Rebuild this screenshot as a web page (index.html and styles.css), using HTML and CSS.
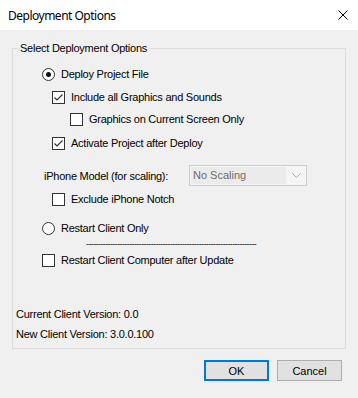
FILE: index.html
```html
<!DOCTYPE html>
<html lang="en">
<head>
    <meta charset="UTF-8">
    <title>Deployment Options</title>
    <link rel="stylesheet" href="styles.css">
</head>
<body>
    <div class="window">
        <div class="titlebar">
            <span class="title">Deployment Options</span>
            <svg class="close" width="10" height="10" viewBox="0 0 10 10">
                <path d="M0.5 0.5 L9.5 9.5 M9.5 0.5 L0.5 9.5" stroke="#000" stroke-width="1" fill="none"/>
            </svg>
        </div>

        <div class="client">
            <fieldset class="group">
                <legend>Select Deployment Options</legend>

                <div class="row lvl0 r-deploy">
                    <span class="radio checked"></span>
                    <span>Deploy Project File</span>
                </div>
                <div class="row lvl1 r-include">
                    <span class="check checked"><svg width="11" height="11" viewBox="0 0 11 11"><path d="M1.5 5.5 L4 8 L9.5 2.5" stroke="#333" stroke-width="1.2" fill="none"/></svg></span>
                    <span>Include all Graphics and Sounds</span>
                </div>
                <div class="row lvl2 r-current">
                    <span class="check"></span>
                    <span>Graphics on Current Screen Only</span>
                </div>
                <div class="row lvl1 r-activate">
                    <span class="check checked"><svg width="11" height="11" viewBox="0 0 11 11"><path d="M1.5 5.5 L4 8 L9.5 2.5" stroke="#333" stroke-width="1.2" fill="none"/></svg></span>
                    <span>Activate Project after Deploy</span>
                </div>
                <div class="row model-row">
                    <span class="model-label">iPhone Model (for scaling):</span>
                    <div class="combo">
                        <span class="combo-text">No Scaling</span>
                        <svg class="combo-arrow" width="9" height="5" viewBox="0 0 9 5"><path d="M0.5 0.5 L4.5 4.5 L8.5 0.5" stroke="#a8a8a8" stroke-width="1" fill="none"/></svg>
                    </div>
                </div>
                <div class="row lvl1 r-notch">
                    <span class="check"></span>
                    <span>Exclude iPhone Notch</span>
                </div>
                <div class="row lvl0 r-restart">
                    <span class="radio"></span>
                    <span>Restart Client Only</span>
                </div>
                <div class="divider">-----------------------------------------------------------------------</div>
                <div class="row lvl0 r-computer">
                    <span class="check"></span>
                    <span>Restart Client Computer after Update</span>
                </div>

                <div class="version v-current">Current Client Version: 0.0</div>
                <div class="version v-new">New Client Version: 3.0.0.100</div>
            </fieldset>

            <div class="buttons">
                <button class="btn default">OK</button>
                <button class="btn">Cancel</button>
            </div>
        </div>
    </div>
</body>
</html>
```

FILE: styles.css
```css
body {
    margin: 0;
    font-family: "Liberation Sans", Arial, sans-serif;
    font-size: 11px;
    letter-spacing: -0.25px;
    color: #000;
    background: #f0f0f0;
}

.window {
    width: 358px;
    height: 398px;
    background: #f0f0f0;
}

.titlebar {
    height: 30px;
    background: #fff;
    display: flex;
    align-items: center;
    justify-content: space-between;
    padding: 0 10px 0 8px;
    box-sizing: border-box;
}

.title {
    font-family: "Noto Sans", "Open Sans", sans-serif;
    font-size: 12px;
    letter-spacing: -0.5px;
    margin-top: 1px;
}

.client {
    padding-top: 11px;
}

/* group box */
.group {
    margin: 0 12px;
    padding: 0;
    height: 308px;
    box-sizing: border-box;
    border: 1px solid #dcdcdc;
    border-radius: 0;
    min-width: 0;
}

.group legend {
    margin-left: 5px;
    padding: 0 2px 0 2px;
    line-height: 14px;
}

.row {
    display: flex;
    align-items: center;
    height: 22px;
    white-space: nowrap;
}

.lvl0 { padding-left: 29px; }
.lvl1 { padding-left: 39px; }
.lvl2 { padding-left: 57px; }

.r-deploy   { margin-top: 8px; }
.r-include  { margin-top: 1px; }
.r-current  { margin-top: 0; }
.r-activate { margin-top: 2px; }
.r-notch    { margin-top: 2px; }
.r-restart  { margin-top: 7px; }
.r-computer { margin-top: 0; }

.radio {
    width: 11px;
    height: 11px;
    border: 1px solid #333;
    border-radius: 50%;
    background: #fff;
    margin-right: 6px;
    position: relative;
    flex: none;
}

.radio.checked::after {
    content: "";
    position: absolute;
    left: 3px;
    top: 3px;
    width: 5px;
    height: 5px;
    border-radius: 50%;
    background: #111;
}

.check {
    width: 11px;
    height: 11px;
    border: 1px solid #333;
    background: #fff;
    margin-right: 6px;
    flex: none;
    display: flex;
}

.model-row {
    height: 21px;
    margin-top: 11px;
    padding-left: 31px;
}

.model-label {
    width: 145px;
}

.combo {
    width: 118px;
    height: 21px;
    box-sizing: border-box;
    border: 1px solid #cccccc;
    background: #f5f5f5;
    display: flex;
    align-items: center;
    justify-content: space-between;
    padding: 0 5px 0 1px;
    letter-spacing: 0;
}

.combo-text {
    background: #ebebeb;
    color: #6d6d6d;
    width: 95px;
    height: 17px;
    line-height: 17px;
    padding-left: 2px;
    box-sizing: border-box;
}

.divider {
    margin-left: 73px;
    height: 9px;
    line-height: 9px;
    font-size: 9px;
    letter-spacing: -0.6px;
    white-space: nowrap;
    margin-top: 1px;
    color: #111;
}

.version {
    padding-left: 3px;
    height: 21px;
    line-height: 21px;
}

.v-current {
    margin-top: 33px;
    height: 20px;
}

/* dialog buttons */
.buttons {
    display: flex;
    justify-content: flex-end;
    gap: 8px;
    padding: 11px 16px 0 0;
}

.btn {
    width: 65px;
    height: 21px;
    box-sizing: border-box;
    background: #e1e1e1;
    border: 1px solid #adadad;
    font-family: "Liberation Sans", Arial, sans-serif;
    font-size: 11px;
    color: #000;
    padding: 0;
}

.btn.default {
    border: 2px solid #0078d7;
}
```
